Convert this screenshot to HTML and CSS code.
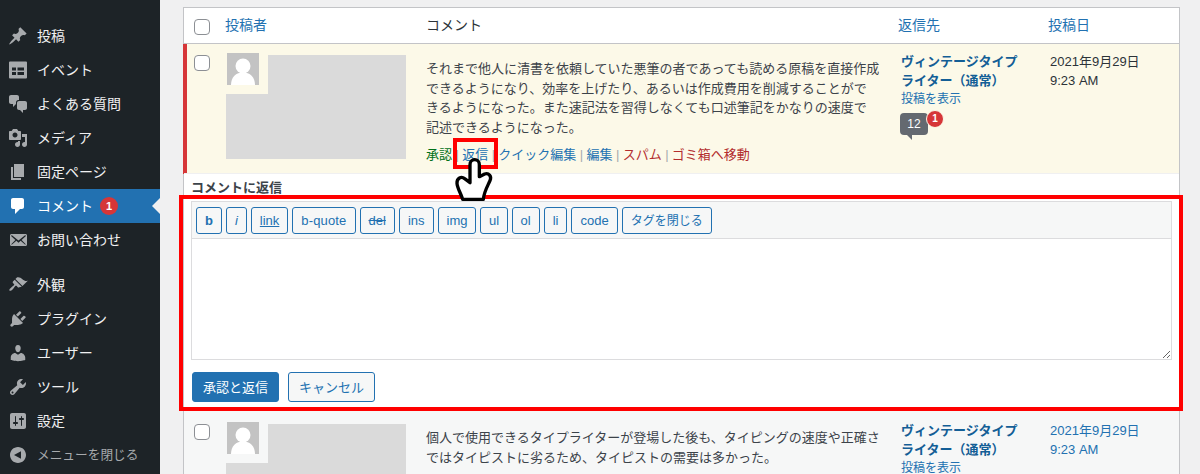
FILE: index.html
```html
<!DOCTYPE html>
<html lang="ja">
<head>
<meta charset="utf-8">
<title>コメント</title>
<link rel="stylesheet" href="styles.css">
</head>
<body>
<div class="page">
  <nav class="sidebar">
    <ul class="menu">
      <li class="item"><svg class="icon" viewBox="0 0 20 20"><path d="M10.44 3.02l1.82-1.82 6.36 6.35-1.83 1.82c-1.05-.68-2.48-.57-3.41.36l-.75.75c-.92.93-1.04 2.35-.35 3.41l-1.83 1.82-2.41-2.41-2.8 2.79c-.42.42-3.38 2.71-3.8 2.29s1.86-3.39 2.28-3.81l2.79-2.79L4.1 9.36l1.83-1.82c1.05.69 2.48.57 3.4-.36l.75-.75c.93-.92 1.05-2.35.36-3.41z"/></svg>投稿</li>
      <li class="item"><svg class="icon" viewBox="0 0 20 20"><path fill-rule="evenodd" d="M2 1.5h16a1 1 0 0 1 1 1v15a1 1 0 0 1-1 1H2a1 1 0 0 1-1-1v-15a1 1 0 0 1 1-1zM4 7.500v3h4v-3zM9.500 7.500v3h6.500v-3zM4 12v3h4v-3zM9.500 12v3h6.500v-3z"/></svg>イベント</li>
      <li class="item"><svg class="icon" viewBox="0 0 20 20"><path d="M11 6h-.82C9.070 6 8 7.200 8 8.160V10l-3 3v-3H3c-1.100 0-2-.9-2-2V3c0-1.100.9-2 2-2h6c1.100 0 2 .9 2 2v3zm0 1h6c1.100 0 2 .9 2 2v5c0 1.100-.9 2-2 2h-2v3l-3-3h-1c-1.100 0-2-.9-2-2V9c0-1.100.9-2 2-2z"/></svg>よくある質問</li>
      <li class="item"><svg class="icon" viewBox="0 0 20 20"><path d="M13 11V4c0-.55-.45-1-1-1h-1.670L9 1H5L3.670 3H2c-.55 0-1 .45-1 1v7c0 .55.45 1 1 1h10c.55 0 1-.45 1-1zM7 4.500c1.380 0 2.500 1.120 2.500 2.500S8.380 9.500 7 9.500 4.500 8.380 4.500 7 5.620 4.500 7 4.500zM14 6h5v10.500c0 1.380-1.120 2.500-2.500 2.500S14 17.880 14 16.500s1.120-2.500 2.500-2.500c.17 0 .34.020.5.050V9h-3V6zm-4 8.050V13h2v3.500c0 1.380-1.120 2.500-2.500 2.500S7 17.880 7 16.500 8.120 14 9.500 14c.17 0 .34.020.5.050z" fill-rule="evenodd"/></svg>メディア</li>
      <li class="item"><svg class="icon" viewBox="0 0 20 20"><path d="M6 15V2h10v13H6zm-1 1h8v2H3V5h2v11z"/></svg>固定ページ</li>
      <li class="item item-active"><svg class="icon" viewBox="0 0 20 20"><path d="M5 2h9c1.100 0 2 .9 2 2v7c0 1.100-.9 2-2 2h-2l-5 5v-5H5c-1.100 0-2-.9-2-2V4c0-1.100.9-2 2-2z"/></svg>コメント<span class="menu-badge">1</span></li>
      <li class="item"><svg class="icon" viewBox="0 0 20 20"><path d="M19 14.500v-9c0-.83-.67-1.500-1.500-1.500H3.490c-.83 0-1.500.67-1.500 1.500v9c0 .83.67 1.500 1.500 1.500H17.500c.83 0 1.500-.67 1.500-1.500zm-1.310-9.110c.33.33.15.67-.03.84L13.600 9.950l3.900 4.060c.12.14.2.36.06.51-.13.16-.43.15-.56.05l-4.370-3.730-2.140 1.950-2.130-1.950-4.370 3.730c-.13.1-.43.11-.56-.05-.14-.15-.06-.37.06-.51l3.900-4.060-4.060-3.720c-.18-.17-.36-.51-.03-.84s.67-.17.95.07l6.240 5.040 6.250-5.040c.28-.24.62-.4.95-.07z"/></svg>お問い合わせ</li>
      <li class="sep" aria-hidden="true"></li>
      <li class="item"><svg class="icon" viewBox="0 0 20 20"><path d="M14.480 11.060L7.410 3.990l1.500-1.500c.5-.56 2.300-.47 3.510.32 1.210.8 1.430 1.280 2.910 2.100 1.180.64 2.450 1.260 4.450.85zm-.71.71L6.700 4.700 4.930 6.470c-.39.39-.39 1.020 0 1.410l1.060 1.060c.39.39.39 1.030 0 1.420-.6.6-1.430 1.110-2.210 1.690-.35.26-.7.53-1.010.84C1.430 13.710.96 15.120 1.500 15.600c.5.530 1.900.08 3.270-1.290.31-.31.58-.66.84-1.010.58-.78 1.090-1.610 1.690-2.210.39-.39 1.030-.39 1.420 0l1.060 1.060c.39.39 1.020.39 1.410 0z"/></svg>外観</li>
      <li class="item"><svg class="icon" viewBox="0 0 20 20"><path d="M13.110 4.360L9.870 7.600 8 5.730l3.240-3.240c.35-.34 1.050-.2 1.560.32.52.51.66 1.210.31 1.550zm-8 1.770l.91-1.120 9.010 9.010-1.190.84c-.71.71-2.630 1.160-3.820 1.160H6.140L4.900 17.260c-.59.59-1.540.59-2.120 0-.59-.58-.59-1.530 0-2.120l1.240-1.240v-3.880c0-1.130.4-3.190 1.090-3.890zm7.260 3.970l3.240-3.240c.34-.35 1.040-.21 1.550.31.52.51.66 1.210.31 1.550l-3.240 3.250z"/></svg>プラグイン</li>
      <li class="item"><svg class="icon" viewBox="0 0 20 20"><path d="M10 9.250c-2.270 0-2.730-3.440-2.730-3.440C7 4.020 7.820 2 9.970 2c2.160 0 2.980 2.020 2.710 3.810 0 0-.41 3.440-2.680 3.440zm0 2.570L12.720 10c2.390 0 4.520 2.330 4.520 4.530v2.490s-3.650 1.130-7.240 1.130c-3.650 0-7.240-1.130-7.240-1.130v-2.490c0-2.250 1.940-4.480 4.470-4.480z"/></svg>ユーザー</li>
      <li class="item"><svg class="icon" viewBox="0 0 20 20"><path d="M16.680 9.770c-1.340 1.340-3.300 1.670-4.950.99l-5.410 6.520c-.99.99-2.590.99-3.580 0s-.99-2.590 0-3.570l6.520-5.420c-.68-1.650-.35-3.610.99-4.950 1.280-1.280 3.120-1.620 4.720-1.060l-2.890 2.890 2.820 2.820 2.860-2.870c.53 1.580.18 3.390-1.080 4.650zM3.810 16.210c.4.39 1.040.39 1.430 0 .4-.4.4-1.040 0-1.430-.39-.4-1.030-.4-1.430 0-.39.39-.39 1.030 0 1.430z"/></svg>ツール</li>
      <li class="item"><svg class="icon" viewBox="0 0 20 20"><path d="M18 16V4c0-1.100-.9-2-2-2H4c-1.100 0-2 .9-2 2v12c0 1.100.9 2 2 2h12c1.100 0 2-.9 2-2zM8 11h1c.55 0 1 .45 1 1s-.45 1-1 1H8v1.500c0 .28-.22.5-.5.5s-.5-.22-.5-.5V13H6c-.55 0-1-.45-1-1s.45-1 1-1h1V5.500c0-.28.22-.5.5-.5s.5.22.5.5V11zm5-2h-1c-.55 0-1-.45-1-1s.45-1 1-1h1V5.500c0-.28.22-.5.5-.5s.5.22.5.5V7h1c.55 0 1 .45 1 1s-.45 1-1 1h-1v5.500c0 .28-.22.5-.5.5s-.5-.22-.5-.5V9z"/></svg>設定</li>
      <li class="item item-close"><svg class="icon" viewBox="0 0 20 20"><path fill-rule="evenodd" d="M18 10c0-4.420-3.580-8-8-8s-8 3.580-8 8 3.580 8 8 8 8-3.580 8-8zm-5-3.800v7.600L6 10z"/></svg>メニューを閉じる</li>
    </ul>
  </nav>

  <main class="content">
    <div class="table">
      <div class="row head">
        <div class="cell-check"><input class="check check-head" type="checkbox" aria-label="すべて選択"></div>
        <a class="link">投稿者</a>
        <span class="head-text">コメント</span>
        <a class="link">返信先</a>
        <a class="link">投稿日</a>
      </div>

      <div class="row row-pending">
        <div class="cell-check"><input class="check" type="checkbox" aria-label="選択"></div>
        <div class="cell-author">
          <div class="redact"></div>
          <svg class="avatar" viewBox="0 0 32 32"><rect width="32" height="32" fill="#c3c3c3"/><circle cx="16" cy="13" r="7.500" fill="#fff"/><path d="M4 32c0-8 5-12.500 12-12.500S28 24 28 32z" fill="#fff"/></svg>
        </div>
        <div class="cell-comment">
          <p class="comment-text">それまで他人に清書を依頼していた悪筆の者であっても読める原稿を直接作成<br>できるようになり、効率を上げたり、あるいは作成費用を削減することがで<br>きるようになった。また速記法を習得しなくても口述筆記をかなりの速度で<br>記述できるようになった。</p>
          <div class="actions"><a class="act-approve">承認</a><span class="bar"> | </span><a class="link">返信</a><span class="bar"> | </span><a class="link">クイック編集</a><span class="bar"> | </span><a class="link">編集</a><span class="bar"> | </span><a class="act-danger">スパム</a><span class="bar"> | </span><a class="act-danger">ゴミ箱へ移動</a></div>
        </div>
        <div class="cell-reply">
          <a class="post-title">ヴィンテージタイプライター（通常）</a>
          <a class="post-view">投稿を表示</a>
          <span class="count">12<span class="count-badge">1</span></span>
        </div>
        <div class="cell-date">2021年9月29日<br>9:23 AM</div>
      </div>

      <section class="reply">
        <div class="reply-title">コメントに返信</div>
        <div class="toolbar">
          <button class="tag tag-b">b</button>
          <button class="tag tag-i">i</button>
          <button class="tag tag-u">link</button>
          <button class="tag tag-quote">b-quote</button>
          <button class="tag tag-s">del</button>
          <button class="tag">ins</button>
          <button class="tag">img</button>
          <button class="tag tag-ul">ul</button>
          <button class="tag">ol</button>
          <button class="tag">li</button>
          <button class="tag">code</button>
          <button class="tag tag-close">タグを閉じる</button>
        </div>
        <textarea class="editor" aria-label="返信"></textarea>
        <div class="reply-actions">
          <button class="btn btn-primary">承認と返信</button>
          <button class="btn">キャンセル</button>
        </div>
      </section>

      <div class="row row-alt">
        <div class="cell-check"><input class="check" type="checkbox" aria-label="選択"></div>
        <div class="cell-author">
          <div class="redact"></div>
          <svg class="avatar" viewBox="0 0 32 32"><rect width="32" height="32" fill="#c3c3c3"/><circle cx="16" cy="13" r="7.500" fill="#fff"/><path d="M4 32c0-8 5-12.500 12-12.500S28 24 28 32z" fill="#fff"/></svg>
        </div>
        <div class="cell-comment">
          <p class="comment-text">個人で使用できるタイプライターが登場した後も、タイピングの速度や正確さ<br>ではタイピストに劣るため、タイピストの需要は多かった。</p>
        </div>
        <div class="cell-reply">
          <a class="post-title">ヴィンテージタイプライター（通常）</a>
          <a class="post-view">投稿を表示</a>
        </div>
        <div class="cell-date cell-date-link">2021年9月29日<br>9:23 AM</div>
      </div>
    </div>
  </main>

  <div class="mark mark-link" aria-hidden="true"></div>
  <div class="mark mark-form" aria-hidden="true"></div>
  <svg class="hand" viewBox="0 0 144 168" aria-hidden="true"><path d="M38 148C32 128 22 115 21 100C20 84 34 78 44 86L60 98V44C60 24 88 24 88 44V80L104 72C116 68 126 78 120 92C112 110 102 125 100 148Z" fill="#fff" stroke="#000" stroke-width="10" stroke-linejoin="round"/></svg>
</div>
</body>
</html>
```

FILE: styles.css
```css
* { box-sizing: border-box; }

html, body {
  margin: 0;
  height: 474px;
  overflow: hidden;
}

body {
  background: #f0f0f1;
  color: #3c434a;
  font: 13px/1.5 "Liberation Sans", "Noto Sans CJK JP", sans-serif;
}

.page {
  position: relative;
  display: flex;
  height: 474px;
  overflow: hidden;
}

/* sidebar */
.sidebar {
  flex: 0 0 160px;
  background: #1d2327;
  color: #f0f0f1;
  padding-top: 19px;
}

.menu {
  list-style: none;
  margin: 0;
  padding: 0;
}

.item {
  position: relative;
  display: flex;
  align-items: center;
  height: 34px;
  padding-left: 8px;
  font-size: 14px;
  line-height: 1;
}

.sep { height: 11px; }

.icon {
  flex: none;
  width: 20px;
  height: 20px;
  margin-right: 9px;
  fill: #a7aaad;
}

.item-active {
  background: #2271b1;
  color: #fff;
}

.item-active .icon { fill: #fff; }

.item-active::after {
  content: "";
  position: absolute;
  right: 0;
  top: 9px;
  border: 8px solid transparent;
  border-left: 0;
  border-right-color: #f0f0f1;
}

.item-close {
  color: #a7aaad;
  font-size: 12.700px;
}

.menu-badge {
  display: flex;
  align-items: center;
  justify-content: center;
  width: 18px;
  height: 18px;
  margin-left: 7px;
  border-radius: 50%;
  background: #d63638;
  color: #fff;
  font-size: 11px;
  font-weight: 700;
}

/* table */
.content {
  flex: 1;
  min-width: 0;
  padding: 7px 20px 0 23px;
}

.table {
  background: #fff;
  border: 1px solid #c3c4c7;
}

.row {
  display: grid;
  grid-template-columns: 41px 201px 472px 150px 1fr;
  align-items: start;
}

.link {
  color: #2271b1;
}

.head {
  align-items: center;
  height: 36px;
  border-bottom: 1px solid #c3c4c7;
  font-size: 14px;
}

.head-text { color: #2c3338; }

.cell-check {
  display: flex;
  padding-left: 10px;
}

.check {
  appearance: none;
  width: 16px;
  height: 16px;
  margin: 11px 0 0;
  background: #fff;
  border: 1px solid #8c8f94;
  border-radius: 4px;
}

.check-head { margin-top: 3px; }

.row-pending {
  height: 130px;
  background: #fcf9e8;
  border-bottom: 1px solid #f0f0f1;
  box-shadow: -1px 0 0 #d63638, inset 3px 0 0 #d63638;
}

.row-alt {
  height: 140px;
  padding-top: 2px;
  background: #f6f7f7;
}

.cell-author {
  position: relative;
  padding-left: 1px;
}

.redact {
  width: 180px;
  height: 104px;
  margin-top: 11px;
  background: #dadada;
  clip-path: polygon(42px 0, 100% 0, 100% 100%, 0 100%, 0 39px, 42px 39px);
}

.avatar {
  position: absolute;
  left: 2px;
  top: 9px;
  width: 32px;
  height: 32px;
}

.cell-comment { padding-top: 15px; }

.comment-text {
  margin: 0 0 8px;
  line-height: 19.500px;
  white-space: nowrap;
}

.actions {
  line-height: 19.500px;
  white-space: pre;
}

.bar {
  color: #a7aaad;
  letter-spacing: -0.150px;
}

.act-approve { color: #007017; }
.act-danger { color: #b32d2e; }

.cell-reply {
  display: flex;
  flex-direction: column;
  align-items: flex-start;
  width: 128px;
  padding: 8px 0 0 3px;
  line-height: 19px;
}

.post-title {
  color: #135e96;
  font-weight: 700;
}

.post-view {
  color: #2271b1;
  font-size: 12px;
}

.count {
  position: relative;
  display: flex;
  align-items: center;
  justify-content: center;
  width: 28px;
  height: 22px;
  margin: 4px 0 0 -1px;
  border-radius: 4px;
  background: #646970;
  color: #fff;
  font-size: 12px;
  line-height: 1;
}

.count::after {
  content: "";
  position: absolute;
  left: 7px;
  top: 100%;
  border: 5px solid transparent;
  border-top-color: #646970;
  border-bottom: 0;
  border-right: 0;
}

.count-badge {
  position: absolute;
  left: 26px;
  top: -3px;
  display: flex;
  align-items: center;
  justify-content: center;
  width: 18px;
  height: 18px;
  border: 1px solid #fcf9e8;
  border-radius: 50%;
  background: #d63638;
  font-size: 10px;
  font-weight: 700;
}

.cell-date {
  padding: 8px 0 0 2px;
  color: #2c3338;
  line-height: 19px;
  white-space: nowrap;
}

.cell-date-link { color: #2271b1; }

/* reply form */
.reply {
  display: flex;
  flex-direction: column;
  height: 237px;
  padding: 0 7px;
}

.reply-title {
  height: 27px;
  padding-top: 4px;
  font-weight: 700;
  line-height: 19px;
}

.toolbar {
  display: flex;
  gap: 4px;
  height: 38px;
  padding: 5px 4px 0;
  background: #f6f7f7;
  border: 1px solid #dcdcde;
}

.tag {
  height: 27px;
  padding: 0 8px;
  background: #f6f7f7;
  border: 1px solid #2271b1;
  border-radius: 3px;
  color: #2271b1;
  font: 13px/1 "Liberation Sans", "Noto Sans CJK JP", sans-serif;
}

.tag-b { font-weight: 700; }
.tag-i { font-style: italic; }
.tag-u { text-decoration: underline; }
.tag-s { text-decoration: line-through; }
.tag-quote { letter-spacing: 0.150px; }
.tag-ul { padding: 0 7.500px; }
.tag-close { font-size: 12px; }

.editor {
  display: block;
  width: 100%;
  height: 122px;
  margin: -1px 0 0;
  padding: 2px 6px;
  background: #fff;
  border: 1px solid #dcdcde;
  border-radius: 0;
  resize: vertical;
  outline: 0;
}

.reply-actions {
  display: flex;
  gap: 9px;
  margin-top: 12px;
  padding-left: 1px;
}

.btn {
  height: 30px;
  width: 87px;
  padding: 0;
  background: #f6f7f7;
  border: 1px solid #2271b1;
  border-radius: 3px;
  color: #2271b1;
  font: 13px/1 "Liberation Sans", "Noto Sans CJK JP", sans-serif;
}

.btn-primary {
  background: #2271b1;
  color: #fff;
}

/* tutorial annotations over the screenshot */
.mark {
  position: absolute;
  border: 4px solid #f00;
}

.mark-link {
  left: 453px;
  top: 138px;
  width: 45px;
  height: 31px;
}

.mark-form {
  left: 179px;
  top: 195px;
  width: 1004px;
  height: 216px;
}

.hand {
  position: absolute;
  left: 450px;
  top: 150px;
  width: 48px;
  height: 56px;
}
```
